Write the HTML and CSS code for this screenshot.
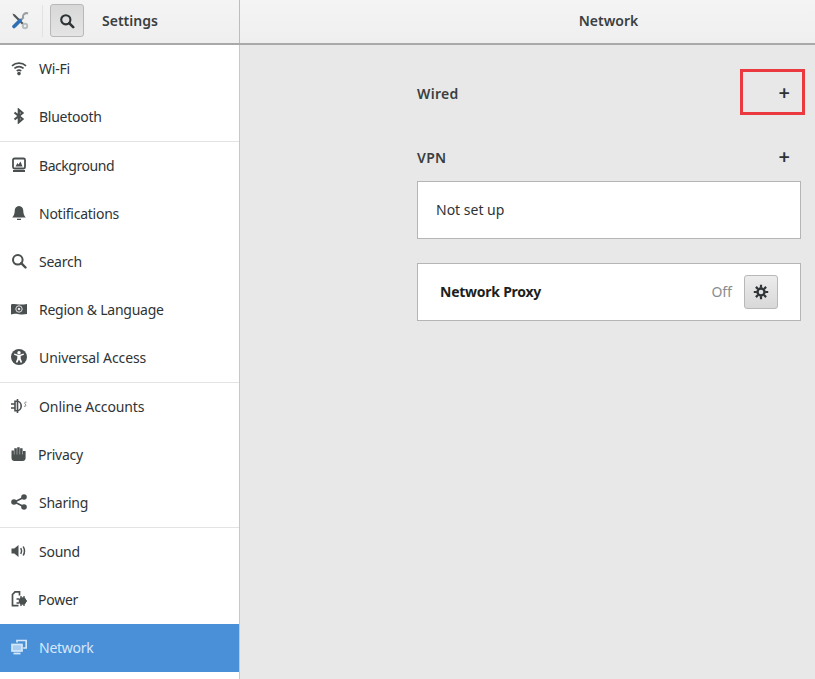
FILE: index.html
```html
<!DOCTYPE html>
<html lang="en">
<head>
<meta charset="utf-8">
<title>Settings - Network</title>
<link rel="stylesheet" href="styles.css">
</head>
<body>
<div class="window">
  <header class="headerbar">
    <div class="header-left">
      <svg class="app-icon" viewBox="0 0 18 18" width="18" height="18"><path d="M1.500 1.500l2.500 1 10 10-1.500 1.500-10-10z" fill="#4d5153"/><path d="M17 1.500a3.500 3.500 0 0 0-4.800 4.300L4.500 14" fill="none" stroke="#9a9ea2" stroke-width="2"/><path d="M9 8.500L3 14.500" stroke="#2f6fb5" stroke-width="3.600" stroke-linecap="round"/><circle cx="14" cy="14" r="3.200" fill="#b9bcbf"/><circle cx="14" cy="14" r="1.200" fill="#f0f0f0"/></svg>
      <span class="header-sep"></span>
      <button class="search-btn"><svg viewBox="0 0 16 16" width="16" height="16"><circle cx="6.800" cy="6.800" r="4.600" fill="none" stroke="#2e3436" stroke-width="2.100"/><path d="M10.200 10.200l4 4" stroke="#2e3436" stroke-width="2.600" stroke-linecap="round"/></svg></button>
      <span class="header-title">Settings</span>
    </div>
    <div class="header-right">Network</div>
  </header>
  <div class="body">
    <nav class="sidebar">
      <div class="row"><svg class="ic" viewBox="0 0 16 16"><path d="M1 5.800c4-3.600 10-3.600 14 0M3.400 8.400c2.800-2.200 6.400-2.200 9.200 0M5.700 10.900c1.400-1 3.200-1 4.600 0" fill="none" stroke="#4a4f50" stroke-width="1.700"/><circle cx="8" cy="13.600" r="1.800" fill="#4a4f50"/></svg><span>Wi-Fi</span></div>
      <div class="row"><svg class="ic" viewBox="0 0 16 16"><path d="M3.500 4.500L11.500 11l-3.700 3.200V1.800L11.500 5l-8 6.500" fill="none" stroke="#4a4f50" stroke-width="2.200"/></svg><span>Bluetooth</span></div>
      <div class="row sep"><svg class="ic" viewBox="0 0 16 16"><rect x="2" y="1.500" width="12" height="10" rx="1.500" fill="none" stroke="#4a4f50" stroke-width="1.800"/><path d="M4.500 9.500l2-3.500 1 1.500L9.500 4.500 11.500 9.500z" fill="#4a4f50"/><rect x="2" y="13" width="12" height="2" fill="#4a4f50"/></svg><span class="tight">Background</span></div>
      <div class="row"><svg class="ic" viewBox="0 0 16 16"><path d="M8 1c-2.800 0-4.300 2.200-4.300 5 0 3-1 4.800-2.500 6.500h13.600C13.300 10.800 12.300 9 12.300 6c0-2.800-1.500-5-4.300-5z" fill="#4a4f50"/><path d="M6 13.700h4V15H6z" fill="#4a4f50"/></svg><span>Notifications</span></div>
      <div class="row"><svg class="ic" viewBox="0 0 16 16"><circle cx="6.800" cy="6.800" r="4.800" fill="none" stroke="#4a4f50" stroke-width="2"/><path d="M10.200 10.200l4.300 4.300" stroke="#4a4f50" stroke-width="2.400" stroke-linecap="round"/></svg><span>Search</span></div>
      <div class="row"><svg class="ic" viewBox="0 0 16 16"><path d="M0 3.500c3-1 5-.2 8 0s5 0 8-.5v10c-3 .5-5 .5-8 .2s-5-.7-8 .3z" fill="#4a4f50"/><circle cx="8" cy="8" r="3.200" fill="none" stroke="#e4e4e4" stroke-width="1"/><circle cx="8" cy="8" r="1.300" fill="#e4e4e4"/></svg><span>Region &amp; Language</span></div>
      <div class="row"><svg class="ic" viewBox="0 0 16 16"><circle cx="8" cy="8" r="8" fill="#4a4f50"/><circle cx="8" cy="3.800" r="1.700" fill="#fff"/><path d="M3 5.800l3.300 1.100v2.500L4.800 13.200l1.500.6L8 10.500l1.700 3.300 1.500-.6-1.500-3.800V6.900L13 5.800l-.4-1.300L8 6 3.400 4.500z" fill="#fff"/></svg><span class="loose">Universal Access</span></div>
      <div class="row sep"><svg class="ic" viewBox="0 0 16 16"><path d="M0 6h4M0 10h4M4 3.200h2c2.500 0 4.200 2.300 4.200 4.800S8.500 12.800 6 12.800H4z" fill="none" stroke="#4a4f50" stroke-width="1.600"/><path d="M6.500 1v14" stroke="#4a4f50" stroke-width="1.600"/><path d="M15.500 4.200c-1.800-.5-2.300 1-1.200 2s.6 2.600-1.200 2" fill="none" stroke="#7a7f80" stroke-width="1"/></svg><span class="loose">Online Accounts</span></div>
      <div class="row"><svg class="ic" viewBox="0 0 16 16"><path d="M.5 4.500h2.400v4h.4V2.200h2.500v6.300h.4V1.200h2.500v7.300h.4V2.200h2.500v6.300h.4V5h2.600v7c0 1.800-1.200 3-3 3H3.500c-1.800 0-3-1.200-3-3z" fill="#4a4f50"/></svg><span class="shift">Privacy</span></div>
      <div class="row"><svg class="ic" viewBox="0 0 16 16"><path d="M12.500 3.500L3.500 8l9 4.500" fill="none" stroke="#4a4f50" stroke-width="1.700"/><circle cx="13" cy="3" r="2.800" fill="#4a4f50"/><circle cx="3" cy="8" r="2.800" fill="#4a4f50"/><circle cx="13" cy="13" r="2.800" fill="#4a4f50"/></svg><span>Sharing</span></div>
      <div class="row sep"><svg class="ic" viewBox="0 0 16 16"><path d="M.5 5.500h2.800L7.500 2v12l-4.200-3.500H.5z" fill="#4a4f50"/><path d="M9.800 5c1 1.800 1 4.200 0 6M12.200 3.500c1.600 2.800 1.600 6.200 0 9" fill="none" stroke="#4a4f50" stroke-width="1.500"/></svg><span>Sound</span></div>
      <div class="row"><svg class="ic" viewBox="0 0 16 16"><path d="M7.500 14.700H1.500V3.500L4 .9h4.500v3.600" fill="none" stroke="#4a4f50" stroke-width="1.700"/><circle cx="11.500" cy="10" r="3.800" fill="#4a4f50"/><path d="M5.500 8h2.500M5.500 12h2.500M14 10h2.200M10 5v2M13 5v2M10 13v2M13 13v2" stroke="#4a4f50" stroke-width="1.300"/></svg><span class="shift">Power</span></div>
      <div class="row active"><svg class="ic" viewBox="0 0 16 16"><rect x="1" y="5.500" width="10" height="6.500" fill="#a9cdf0" stroke="#d5e8fa" stroke-width="1.700"/><path d="M2.500 14.500h7" stroke="#d5e8fa" stroke-width="1.800"/><path d="M6 3.500V1.500h9.200V9h-3" fill="none" stroke="#d5e8fa" stroke-width="1.700"/></svg><span>Network</span></div>
    </nav>
    <main class="content">
      <section class="panel">
        <div class="section-head wired"><h2>Wired</h2><span class="plus">+</span><span class="callout"></span></div>
        <div class="section-head"><h2>VPN</h2><span class="plus">+</span></div>
        <div class="card vpn">Not set up</div>
        <div class="card proxy">
          <strong>Network Proxy</strong>
          <span class="off">Off</span>
          <button class="gear"><svg viewBox="0 0 16 16" width="16" height="16"><path d="M8 4.500a3.500 3.500 0 1 0 0 7 3.500 3.500 0 0 0 0-7z" fill="none" stroke="#2e3436" stroke-width="2.400"/><path d="M8 .8v3M8 12.200v3M.8 8h3M12.200 8h3M2.900 2.900L5 5M11 11l2.100 2.100M2.900 13.100L5 11M11 5l2.100-2.100" stroke="#2e3436" stroke-width="2.200"/></svg></button>
        </div>
      </section>
    </main>
  </div>
</div>
</body>
</html>
```
FILE: styles.css
```css
* { box-sizing: border-box; }
html, body { margin: 0; padding: 0; }
body { width: 815px; height: 679px; overflow: hidden; font-family: "Noto Sans", sans-serif; font-size: 14px; color: #2e3436; }
.window { display: flex; flex-direction: column; height: 679px; }
.headerbar { display: flex; height: 45px; flex: none; background: linear-gradient(#f4f4f4, #efefef); border-bottom: 2px solid #a9a9a9; }
.header-left { width: 240px; display: flex; align-items: center; border-right: 1px solid #bdbdbd; padding-bottom: 2px; }
.app-icon { margin-left: 11px; }
.header-sep { width: 1px; height: 32px; background: #e2e2e2; margin-left: 13px; }
.search-btn { width: 34px; height: 33px; margin-left: 7px; padding: 0; display: flex; align-items: center; justify-content: center; border: 1px solid #b8b8b8; border-radius: 3px; background: linear-gradient(#d8d8d8, #e4e4e4); }
.header-title { margin-left: 18px; font-weight: 600; color: #3a3f40; }
.header-right { flex: 1; display: flex; align-items: center; justify-content: center; padding: 0 0 2px 162px; font-weight: 600; color: #3a3f40; }
.body { flex: 1; display: flex; min-height: 0; }
.sidebar { width: 240px; flex: none; background: #fff; border-right: 1px solid #c8c8c8; }
.row { height: 48px; display: flex; align-items: center; padding: 0 0 2px 11px; gap: 12px; color: #2e3436; letter-spacing: -0.25px; }
.row.sep { height: 49px; border-top: 1px solid #e3e3e3; }
.row .shift { margin-left: -1px; }
.row .tight { letter-spacing: -0.45px; }
.row .loose { letter-spacing: -0.1px; }
.ic { width: 16px; height: 16px; flex: none; }
.row.active { background: #4a90d9; color: #d5e8fa; }
.content { flex: 1; background: #e8e8e8; }
.panel { width: 384px; margin-left: 177px; padding-top: 24px; }
.section-head { position: relative; display: flex; justify-content: space-between; align-items: center; height: 48px; padding-right: 11px; }
.section-head.wired { margin-bottom: 16px; }
.section-head h2 { margin: 0; font-size: 14px; font-weight: 600; color: #3a3f40; letter-spacing: 0.3px; }
.plus { font-size: 20px; font-weight: 600; line-height: 1; color: #2e3436; }
.callout { position: absolute; left: 323px; top: 0; width: 65px; height: 46px; border: 3px solid #ea3a40; }
.card { background: #fff; border: 1px solid #b5b5b5; display: flex; align-items: center; height: 58px; padding-bottom: 2px; }
.vpn { padding-left: 18px; }
.proxy { margin-top: 24px; padding: 0 22px; }
.proxy strong { font-weight: 700; color: #1c1f20; flex: 1; letter-spacing: -0.25px; margin-bottom: 2px; }
.off { color: #8a8d8e; margin: 0 12px 2px 0; }
.gear { width: 34px; height: 34px; padding: 0; display: flex; align-items: center; justify-content: center; border: 1px solid #b8b8b8; border-radius: 3px; background: linear-gradient(#ececec, #d8d8d8); }
```
